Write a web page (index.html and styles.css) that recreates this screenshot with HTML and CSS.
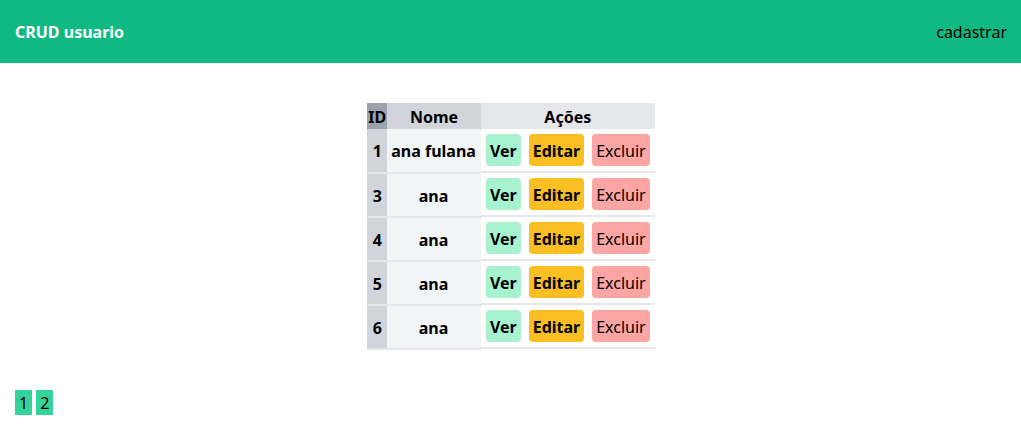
FILE: index.html
```html
<!DOCTYPE html>
<html lang="pt-BR">
<head>
<meta charset="utf-8">
<title>CRUD usuario</title>
<link rel="stylesheet" href="styles.css">
</head>
<body>
<header class="topbar">
  <h1 class="brand">CRUD usuario</h1>
  <nav><a class="nav-link" href="#cadastrar">cadastrar</a></nav>
</header>
<main class="content">
  <table class="users">
    <thead>
      <tr><th class="head-id">ID</th><th class="head-name">Nome</th><th class="head-actions">Ações</th></tr>
    </thead>
    <tbody>
      <tr><th class="id">1</th><th class="name">ana fulana</th><td class="cell"><div class="actions"><a class="btn view" href="#ver-1">Ver</a><a class="btn edit" href="#editar-1">Editar</a><button class="btn delete" type="button">Excluir</button></div></td></tr>
      <tr><th class="id">3</th><th class="name">ana</th><td class="cell"><div class="actions"><a class="btn view" href="#ver-3">Ver</a><a class="btn edit" href="#editar-3">Editar</a><button class="btn delete" type="button">Excluir</button></div></td></tr>
      <tr><th class="id">4</th><th class="name">ana</th><td class="cell"><div class="actions"><a class="btn view" href="#ver-4">Ver</a><a class="btn edit" href="#editar-4">Editar</a><button class="btn delete" type="button">Excluir</button></div></td></tr>
      <tr><th class="id">5</th><th class="name">ana</th><td class="cell"><div class="actions"><a class="btn view" href="#ver-5">Ver</a><a class="btn edit" href="#editar-5">Editar</a><button class="btn delete" type="button">Excluir</button></div></td></tr>
      <tr><th class="id">6</th><th class="name">ana</th><td class="cell"><div class="actions"><a class="btn view" href="#ver-6">Ver</a><a class="btn edit" href="#editar-6">Editar</a><button class="btn delete" type="button">Excluir</button></div></td></tr>
    </tbody>
  </table>
</main>
<nav class="pages" aria-label="Páginas">
  <a class="page" href="#1">1</a>
  <a class="page" href="#2">2</a>
</nav>
</body>
</html>
```

FILE: styles.css
```css
* {
  box-sizing: border-box;
}

body {
  margin: 0;
  background: #fff;
  color: #000;
  font: 16px/24px "Noto Sans", sans-serif;
}

a {
  color: inherit;
  text-decoration: none;
}

.topbar {
  display: flex;
  align-items: center;
  justify-content: space-between;
  height: 63px;
  padding: 0 14px 0 15px;
  background: #10b981;
}

.brand {
  margin: 0;
  color: #fff;
  font-size: 16px;
}

.content {
  display: flex;
  justify-content: center;
  padding: 40px 14px 40px 15px;
}

.users {
  border-collapse: collapse;
}

.users th {
  padding: 2px 1px 0;
}

.users .head-id {
  background: #9ca3af;
}

.users .head-name {
  background: #d1d5db;
}

.users .head-actions {
  background: #e5e7eb;
}

.users .id,
.users .name {
  padding-top: 1px;
  border-bottom: 2px solid #e5e7eb;
}

.users .id {
  background: #d1d5db;
}

.users .name {
  padding-right: 5px;
  padding-left: 4px;
  background: #f3f4f6;
}

.users .cell {
  padding: 0;
  vertical-align: top;
}

.actions {
  display: flex;
  gap: 8px;
  padding: 5px;
  border-bottom: 2px solid #e5e7eb;
}

.btn {
  padding: 5px 4px 3px;
  border: 0;
  border-radius: 4px;
  color: #000;
  font: inherit;
}

.view {
  background: #a7f3d0;
  font-weight: 700;
}

.edit {
  background: #fbbf24;
  font-weight: 700;
}

.delete {
  background: #fca5a5;
}

.pages {
  display: flex;
  gap: 4px;
  padding: 0 15px;
}

.page {
  padding: 1px 4px 0;
  background: #34d399;
}
```
